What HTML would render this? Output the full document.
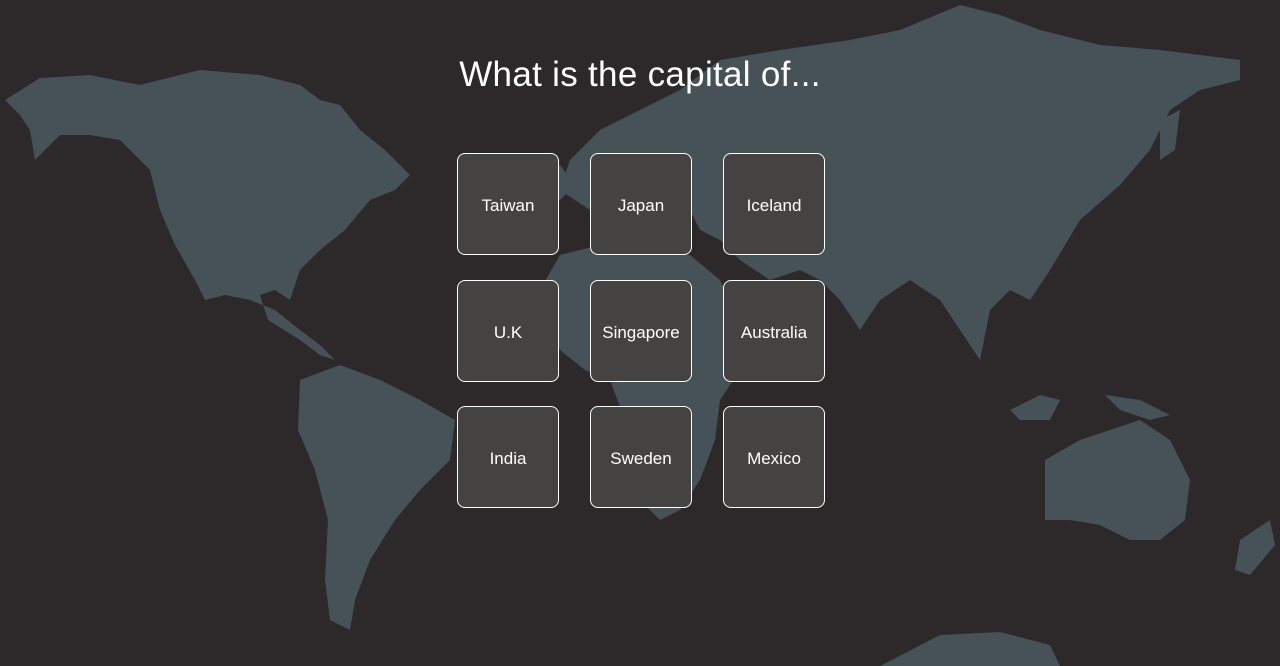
<!DOCTYPE html>
<html><head><meta charset="utf-8"><style>
html,body{margin:0;padding:0;width:1280px;height:666px;overflow:hidden;background:#2d292a;font-family:"Liberation Sans",sans-serif}
svg{position:absolute;left:0;top:0}
h1{position:absolute;top:55px;left:0;width:1280px;text-align:center;margin:0;color:#fff;font-weight:400;font-size:35px;letter-spacing:0.3px}
.c{position:absolute;width:100px;height:100px;border:1px solid #fff;border-radius:8px;background:#454341;color:#fff;font-size:17px;font-weight:normal;display:flex;align-items:center;justify-content:center;padding-top:4px;box-sizing:content-box;height:96px}
</style></head><body>
<svg width="1280" height="666" viewBox="0 0 1280 666">
<g fill="#465158">
<path d="M5,100 L40,78 L90,75 L140,85 L200,70 L260,75 L300,85 L320,100 L340,105 L360,130 L385,150 L410,175 L395,190 L370,200 L345,230 L320,250 L300,270 L290,300 L275,290 L260,295 L268,320 L300,340 L320,355 L335,360 L320,345 L300,330 L275,310 L250,300 L225,295 L205,300 L195,280 L175,245 L160,210 L150,170 L120,140 L90,135 L60,135 L35,160 L30,130 L20,115 Z"/>
<path d="M230,140 L260,110 L300,100 L330,115 L310,140 L280,150 L250,155 Z"/>
<path d="M300,380 L340,365 L380,380 L420,400 L455,420 L450,460 L420,490 L395,520 L370,560 L355,600 L350,630 L330,620 L325,580 L328,520 L315,470 L298,430 Z"/>
<path d="M850,40 L900,30 L960,5 L1000,15 L1040,30 L1100,45 L1160,50 L1240,60 L1240,80 L1200,90 L1170,110 L1150,150 L1120,185 L1080,220 L1050,270 L1030,300 L1010,290 L990,310 L980,360 L960,330 L940,300 L910,280 L880,300 L860,330 L840,300 L820,280 L800,270 L770,280 L740,260 L720,240 L700,230 L690,210 L660,200 L630,210 L600,230 L590,210 L560,190 L570,160 L600,130 L640,110 L680,90 L720,60 L780,50 Z"/>
<path d="M545,170 L560,165 L575,185 L560,200 L545,190 Z"/>
<path d="M1160,120 L1180,110 L1175,150 L1160,160 Z"/>
<path d="M560,255 L600,245 L640,250 L690,255 L720,280 L740,320 L760,340 L740,370 L720,400 L715,440 L700,480 L680,510 L660,520 L640,500 L630,460 L625,420 L610,380 L585,370 L560,350 L545,320 L540,290 Z"/>
<path d="M1045,460 L1080,440 L1110,430 L1140,420 L1170,440 L1190,480 L1185,520 L1160,540 L1130,540 L1100,525 L1070,520 L1045,520 Z"/>
<path d="M1010,410 L1040,395 L1060,400 L1050,420 L1020,420 Z"/>
<path d="M1105,395 L1140,400 L1170,415 L1150,420 L1120,410 Z"/>
<path d="M1240,540 L1270,520 L1275,545 L1250,575 L1235,570 Z"/>
<path d="M880,666 L940,635 L1000,632 L1050,645 L1060,666 Z"/>
</g>
</svg>
<h1>What is the capital of...</h1>
<div class="c" style="left:457px;top:153px">Taiwan</div>
<div class="c" style="left:590px;top:153px">Japan</div>
<div class="c" style="left:723px;top:153px">Iceland</div>
<div class="c" style="left:457px;top:280px">U.K</div>
<div class="c" style="left:590px;top:280px">Singapore</div>
<div class="c" style="left:723px;top:280px">Australia</div>
<div class="c" style="left:457px;top:406px">India</div>
<div class="c" style="left:590px;top:406px">Sweden</div>
<div class="c" style="left:723px;top:406px">Mexico</div>
</body></html>
